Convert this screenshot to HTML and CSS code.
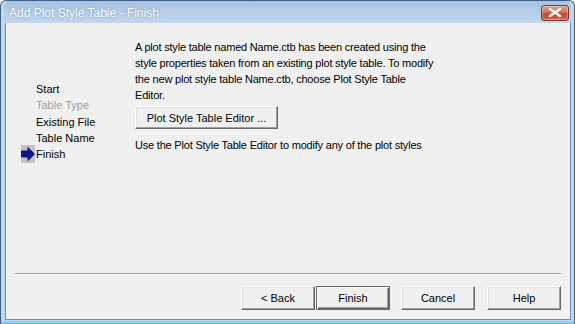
FILE: index.html
```html
<html>
	<head>
		<title>Add Plot Style Table - Finish</title>
		<meta name="viewport" content="width=device-width,initial-scale=1">
		<link rel="stylesheet" href="styles.css">
	</head>
	<body>
		<div class="window">
			<div class="titlebar">
				<span class="title">Add Plot Style Table - Finish</span>
				<span class="close">
					<svg width="14" height="9" viewBox="0 0 14 9">
						<path d="M2 1 L12 8 M12 1 L2 8" stroke="#fff" stroke-width="2.4" stroke-linecap="round"/>
					</svg>
				</span>
			</div>
			<div class="client">
				<div class="main">
					<ul class="steps">
						<li>Start</li>
						<li class="disabled">Table Type</li>
						<li>Existing File</li>
						<li>Table Name</li>
						<li class="current">
							<svg class="arrow" width="16" height="18" viewBox="0 0 16 18">
								<rect x="1" y="0" width="14" height="18" fill="#c4c4c4"/>
								<polygon points="1,5.5 7.5,5.5 7.5,1.5 15,9 7.5,16.5 7.5,12.5 1,12.5" fill="#14148a"/>
							</svg>
							Finish
						</li>
					</ul>
					<div class="content">
						<p>A plot style table named Name.ctb has been created using the style properties taken from an existing plot style table. To modify the new plot style table Name.ctb, choose Plot Style Table Editor.</p>
						<button class="btn editor">Plot Style Table Editor ...</button>
						<p>Use the Plot Style Table Editor to modify any of the plot styles</p>
					</div>
				</div>
				<div class="footer">
					<div class="separator"></div>
					<div class="buttons">
						<button class="btn">&lt; Back</button>
						<button class="btn default">Finish</button>
						<button class="btn gap">Cancel</button>
						<button class="btn gap">Help</button>
					</div>
				</div>
			</div>
		</div>
	</body>
</html>
```

FILE: styles.css
```css
* {
	margin: 0;
	padding: 0;
	box-sizing: border-box;
}

body {
	width: 575px;
	height: 324px;
	overflow: hidden;
	background: #fff;
	font-family: 'Liberation Sans', Arial, sans-serif;
	font-size: 11px;
	color: #000;
}

.window {
	width: 575px;
	height: 324px;
	display: flex;
	flex-direction: column;
	background: #c2d6ec;
	border: 1px solid #3e5f86;
	border-bottom: 1px solid #3fc3e0;
	border-radius: 6px 6px 0 0;
	padding: 0 3px 3px 3px;
	box-shadow: inset 0 -2px 0 #8fd5ea;
}

.titlebar {
	height: 22px;
	display: flex;
	align-items: center;
	justify-content: space-between;
	padding: 0 2px 0 5px;
	background: linear-gradient(#a6c2e4, #b6cee9 50%, #c2d6ec);
	border-radius: 5px 5px 0 0;
}

.title {
	font-family: 'Liberation Sans', Arial, sans-serif;
	font-size: 12px;
	color: #fff;
	text-shadow: 0 0 3px #7d9ec2, 0 0 1px #8aa7c8;
	padding-top: 1px;
}

.close {
	width: 28px;
	height: 16px;
	margin-top: 1px;
	display: flex;
	align-items: center;
	justify-content: center;
	border: 1px solid #7a3428;
	border-radius: 3px;
	background: linear-gradient(#e0a192, #d4735e 45%, #c1432c 55%, #cc6a52);
	box-shadow: inset 0 0 0 1px rgba(255,255,255,.35);
}

.client {
	flex: 1;
	display: flex;
	flex-direction: column;
	background: #f0f0f0;
	border: 1px solid #6d8fb6;
	border-top: 0;
	margin-left: 1px;
}

.main {
	flex: 1;
	display: flex;
}

.steps {
	list-style: none;
	width: 129px;
	padding: 58px 0 0 30px;
}

.steps li {
	height: 16.3px;
	line-height: 16px;
	position: relative;
}

.steps .disabled {
	color: #a0a0a0;
}

.steps .arrow {
	position: absolute;
	left: -16px;
	top: -1px;
}

.content {
	padding-top: 16px;
	width: 300px;
	letter-spacing: -0.2px;
}

.content p {
	line-height: 16px;
}

.btn {
	font-family: 'Liberation Sans', Arial, sans-serif;
	font-size: 11px;
	color: #000;
	background: #f0f0f0;
	border: 1px solid;
	border-color: #fff #696969 #696969 #fff;
	box-shadow: inset -1px -1px 0 #a0a0a0, inset 1px 1px 0 #e3e3e3;
	height: 24px;
	width: 74px;
}

.btn.editor {
	width: 143px;
	height: 23px;
	margin: 3px 0 8px;
	letter-spacing: 0;
}

.btn.default {
	border: 1px solid #646464;
	box-shadow: inset 1px 1px 0 #fff, inset -1px -1px 0 #696969, inset -2px -2px 0 #a0a0a0;
	margin-left: 1px;
}

.btn.gap {
	margin-left: 11px;
}

.btn.gap:last-child {
	margin-left: 12px;
}

.footer {
	height: 46px;
	padding: 0 9px 0 9px;
}

.separator {
	height: 2px;
	border-top: 1px solid #a0a0a0;
	border-bottom: 1px solid #fff;
}

.buttons {
	display: flex;
	justify-content: flex-end;
	padding-top: 11px;
}
```
